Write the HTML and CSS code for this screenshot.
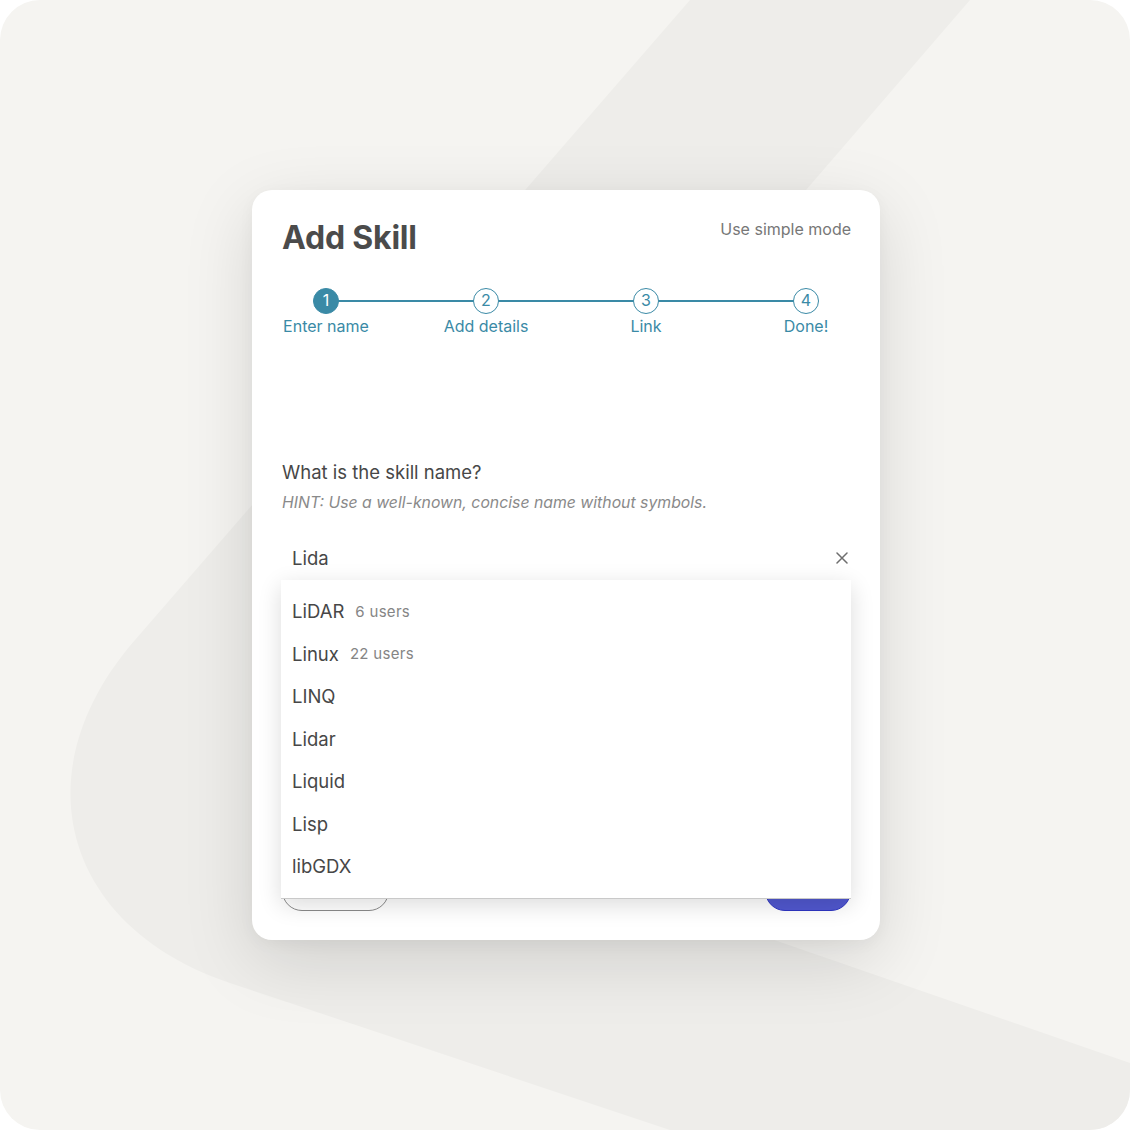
FILE: index.html
```html
<!DOCTYPE html>
<html lang="en">
<head>
<meta charset="utf-8">
<title>Add Skill</title>
<link rel="stylesheet" href="styles.css">
</head>
<body>
<div class="page">
  <svg class="bg-shape" width="1130" height="1130" viewBox="0 0 1130 1130" aria-hidden="true">
    <path d="M690 0 L970 0 L300 776 L1130 1063 L1130 1130 L670 1130 L230 983 C63 927 20 772 135 640 Z" fill="#eeedea"/>
  </svg>
  <div class="card">
    <div class="card-head">
      <h1 class="title">Add Skill</h1>
      <span class="mode-link">Use simple mode</span>
    </div>
    <div class="stepper">
      <div class="step active"><span class="dot">1</span><span class="step-label">Enter name</span></div>
      <div class="step"><span class="dot">2</span><span class="step-label">Add details</span></div>
      <div class="step"><span class="dot">3</span><span class="step-label">Link</span></div>
      <div class="step"><span class="dot">4</span><span class="step-label">Done!</span></div>
    </div>
    <div class="question">What is the skill name?</div>
    <div class="hint">HINT: Use a well-known, concise name without symbols.</div>
    <div class="field">
      <div class="input-row">
        <span class="input-value">Lida</span>
        <svg class="clear" width="12" height="12" viewBox="0 0 12 12" aria-hidden="true"><path d="M1 1 L11 11 M11 1 L1 11" stroke="#6e6e6e" stroke-width="1.5" stroke-linecap="round"/></svg>
      </div>
      <ul class="dropdown">
        <li class="option"><span class="opt-name">LiDAR</span><span class="opt-meta">6 users</span></li>
        <li class="option"><span class="opt-name">Linux</span><span class="opt-meta">22 users</span></li>
        <li class="option"><span class="opt-name">LINQ</span></li>
        <li class="option"><span class="opt-name">Lidar</span></li>
        <li class="option"><span class="opt-name">Liquid</span></li>
        <li class="option"><span class="opt-name">Lisp</span></li>
        <li class="option"><span class="opt-name">libGDX</span></li>
      </ul>
    </div>
    <div class="actions">
      <button class="btn btn-outline">Cancel</button>
      <button class="btn btn-primary">Next</button>
    </div>
  </div>
</div>
</body>
</html>
```
FILE: styles.css
```css
* { box-sizing: border-box; }
html, body { margin: 0; padding: 0; background: #ffffff; }
body { font-family: Inter, "Noto Sans", "Liberation Sans", sans-serif; color: #4a4a4a; }

.page {
  position: relative;
  width: 1130px;
  height: 1130px;
  border-radius: 40px;
  overflow: hidden;
  background: #f5f4f1;
  display: flex;
  align-items: center;
  justify-content: center;
  padding-left: 2px;
}

.bg-shape { position: absolute; left: 0; top: 0; }

.card {
  position: relative;
  width: 628px;
  height: 750px;
  background: #ffffff;
  border-radius: 20px;
  box-shadow: 0 20px 70px rgba(0, 0, 0, 0.13), 0 4px 16px rgba(0, 0, 0, 0.04);
  padding: 30px 29px 29px 30px;
  display: flex;
  flex-direction: column;
}

.card-head {
  display: flex;
  justify-content: space-between;
  align-items: flex-start;
}
.title {
  margin: 0;
  font-size: 32px;
  line-height: 36px;
  font-weight: 700;
  color: #4b4b4b;
  letter-spacing: -0.2px;
}
.mode-link {
  font-size: 16px;
  line-height: 18px;
  color: #777777;
}

.stepper {
  position: relative;
  margin-top: 32px;
  display: flex;
  justify-content: space-between;
  margin-right: 1px;
}
.stepper::before {
  content: "";
  position: absolute;
  left: 44px;
  right: 44px;
  top: 12px;
  height: 2px;
  background: #3a8aa6;
}
.step {
  position: relative;
  width: 88px;
  display: flex;
  flex-direction: column;
  align-items: center;
}
.dot {
  width: 26px;
  height: 26px;
  border-radius: 50%;
  border: 1.5px solid #3a8aa6;
  background: #ffffff;
  color: #3a8aa6;
  font-size: 16px;
  line-height: 23px;
  text-align: center;
}
.step.active .dot { background: #3a8aa6; color: #ffffff; }
.step-label {
  margin-top: 3px;
  font-size: 16px;
  line-height: 18px;
  color: #3a8aa6;
  white-space: nowrap;
}

.question {
  margin-top: 126px;
  font-size: 18.5px;
  line-height: 22px;
  color: #474747;
}
.hint {
  margin-top: 11px;
  font-size: 15.8px;
  line-height: 18px;
  font-style: italic;
  color: #8a8a8a;
}

.field { position: relative; margin-top: 24px; }
.input-row {
  height: 44px;
  display: flex;
  align-items: center;
  justify-content: space-between;
  padding: 0 3px 0 10px;
}
.input-value { font-size: 18.5px; color: #474747; }

.dropdown {
  position: absolute;
  z-index: 2;
  top: 44px;
  left: -1px;
  right: 0;
  margin: 0;
  padding: 10px 0;
  list-style: none;
  background: #ffffff;
  border-bottom: 1.5px solid #c9c9c9;
  box-shadow: 0 6px 22px rgba(0, 0, 0, 0.14);
}
.option {
  height: 42.5px;
  display: flex;
  align-items: center;
  gap: 11px;
  padding-left: 11px;
}
.opt-name { font-size: 18.5px; color: #474747; }
.opt-meta { font-size: 15px; color: #858585; letter-spacing: 0.3px; }

.actions {
  margin-top: auto;
  display: flex;
  justify-content: space-between;
}
.btn {
  height: 40px;
  border-radius: 20px;
  font-family: inherit;
  font-size: 15px;
}
.btn-outline {
  width: 107px;
  background: #ffffff;
  border: 1px solid #8a8a8a;
  color: #4a4a4a;
}
.btn-primary {
  width: 86px;
  background: #5158cf;
  border: 1px solid #2e35c2;
  color: #ffffff;
}
```
